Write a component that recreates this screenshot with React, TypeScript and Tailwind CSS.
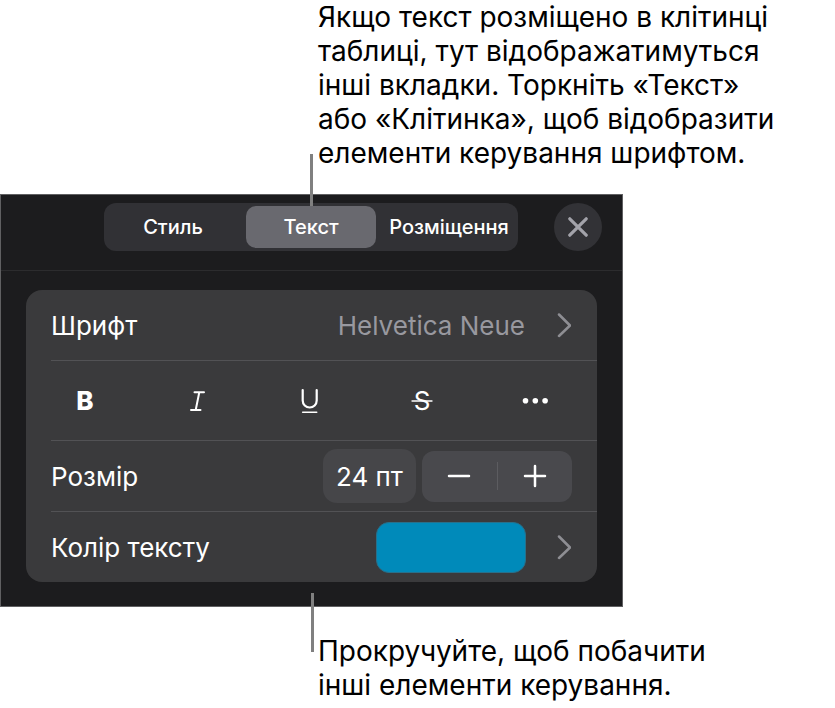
import { useState } from 'react'
import type { ReactNode } from 'react'

const TABS = ['Стиль', 'Текст', 'Розміщення']

function Chevron() {
  return (
    <svg
      viewBox="0 0 14 26"
      className="h-[26px] w-[14px] shrink-0 fill-none stroke-[#8e8e93]"
      strokeWidth="2.5"
      strokeLinecap="round"
      strokeLinejoin="round"
      aria-hidden
    >
      <path d="M2 2.5 13 13.500 2 24" />
    </svg>
  )
}

function Divider() {
  return <hr className="ml-[25px] border-t border-[#525255]" />
}

function FormatButton({ label, children }: { label: string; children: ReactNode }) {
  return (
    <button type="button" aria-label={label} className="grid h-full place-items-center text-white">
      <svg
        viewBox="0 0 32 32"
        className="h-8 w-8 fill-none stroke-current"
        strokeWidth="2"
        strokeLinecap="round"
        aria-hidden
      >
        {children}
      </svg>
    </button>
  )
}

function Header() {
  const [active, setActive] = useState('Текст')

  return (
    <header className="flex items-center gap-9 border-b border-[#2c2c2e] pt-2 pr-5 pb-[19px] pl-[103px]">
      <div role="tablist" className="grid h-12 min-w-0 flex-1 grid-cols-3 rounded-xl bg-[#313135]">
        {TABS.map((tab) => (
          <button
            key={tab}
            type="button"
            role="tab"
            aria-selected={tab === active}
            onClick={() => setActive(tab)}
            className={
              tab === active
                ? 'mx-1 my-[3px] rounded-[10px] bg-[#69696f] text-xl font-medium text-white'
                : 'mx-1 my-[3px] rounded-[10px] text-xl font-medium text-white'
            }
          >
            {tab}
          </button>
        ))}
      </div>
      <button
        type="button"
        aria-label="Закрити"
        className="grid h-12 w-12 shrink-0 place-items-center rounded-full bg-[#323236]"
      >
        <svg
          viewBox="0 0 20 20"
          className="h-5 w-5 fill-none stroke-[#a3a3aa]"
          strokeWidth="3.2"
          strokeLinecap="round"
          aria-hidden
        >
          <path d="M1.8 1.8 18.2 18.2M18.2 1.8 1.8 18.2" />
        </svg>
      </button>
    </header>
  )
}

function FontCard() {
  const [size, setSize] = useState(24)

  return (
    <div className="rounded-2xl bg-[#3a3a3c] text-[26px] text-white">
      <button type="button" className="flex h-[70px] w-full items-center pr-[26px] pl-[25px] text-left">
        <span className="flex-1">Шрифт</span>
        <span className="mr-8 text-[#98989f]">Helvetica Neue</span>
        <Chevron />
      </button>
      <Divider />

      <div className="grid h-[79px] grid-cols-5 pr-1.5 pl-[3px]">
        <FormatButton label="Жирний">
          <text x="16" y="25" textAnchor="middle" fontSize="26" fontWeight="800" className="fill-current stroke-none">
            B
          </text>
        </FormatButton>
        <FormatButton label="Курсив">
          <path d="M12.500 7.200H22M9 25h9.500M17.300 7.200 13.700 25" />
        </FormatButton>
        <FormatButton label="Підкреслений">
          <path d="M8.700 5v10.500a7 7 0 0 0 14 0V5" strokeWidth="2.200" />
          <path d="M8.700 27.200h14" strokeWidth="1.600" />
        </FormatButton>
        <FormatButton label="Закреслений">
          <text x="16" y="25" textAnchor="middle" fontSize="26" className="fill-current stroke-none">
            S
          </text>
          <path d="M6 16h20" strokeWidth="1.300" />
        </FormatButton>
        <FormatButton label="Більше">
          <g className="fill-current stroke-none">
            <circle cx="6.500" cy="15.700" r="2.800" />
            <circle cx="16.300" cy="15.700" r="2.800" />
            <circle cx="26.100" cy="15.700" r="2.800" />
          </g>
        </FormatButton>
      </div>
      <Divider />

      <div className="flex h-[70px] items-center pr-[25px] pl-[25px]">
        <label htmlFor="size" className="flex-1">
          Розмір
        </label>
        <input
          id="size"
          value={`${size} пт`}
          readOnly
          className="mr-1.5 h-[54px] w-[93px] rounded-[14px] bg-[#464649] text-center"
        />
        <div className="flex h-[51px] w-[150px] items-center rounded-xl bg-[#49494d]">
          <button
            type="button"
            aria-label="Зменшити"
            onClick={() => setSize(size - 1)}
            className="grid h-full flex-1 place-items-center"
          >
            <svg viewBox="0 0 24 24" className="h-6 w-6 stroke-white" strokeWidth="2.500" strokeLinecap="round">
              <path d="M2 12h20" />
            </svg>
          </button>
          <span className="h-7 w-px bg-[#5c5c60]" />
          <button
            type="button"
            aria-label="Збільшити"
            onClick={() => setSize(size + 1)}
            className="grid h-full flex-1 place-items-center"
          >
            <svg viewBox="0 0 24 24" className="h-6 w-6 stroke-white" strokeWidth="2.500" strokeLinecap="round">
              <path d="M2 12h20M12 2v20" />
            </svg>
          </button>
        </div>
      </div>
      <Divider />

      <button type="button" className="flex h-[70px] w-full items-center pr-[26px] pl-[25px] text-left">
        <span className="flex-1">Колір тексту</span>
        <span className="mr-[31px] h-[51px] w-[150px] rounded-[13px] border border-[#28708b] bg-[#008aba]" />
        <Chevron />
      </button>
    </div>
  )
}

export default function App() {
  return (
    <main className="bg-white font-['Inter','Noto_Sans',sans-serif] text-black">
      <div className="relative pb-6 pl-[318px] text-[28px] leading-[34px]">
        <p>
          Якщо текст розміщено в клітинці
          <br />
          таблиці, тут відображатимуться
          <br />
          інші вкладки. Торкніть «Текст»
          <br />
          або «Клітинка», щоб відобразити
          <br />
          елементи керування шрифтом.
        </p>
        {/* leader down to the active tab */}
        <span className="absolute -bottom-3 left-[310px] z-10 h-[52px] w-[3px] bg-[#808080]" />
      </div>

      <section className="max-w-[623px] border border-[#606062] bg-[#1c1c1e]">
        <Header />
        <div className="px-[25px] pt-[19px] pb-6">
          <FontCard />
        </div>
      </section>

      <div className="relative pt-[27px] pl-[318px] text-[28px] leading-[34px]">
        <p>
          Прокручуйте, щоб побачити
          <br />
          інші елементи керування.
        </p>
        <span className="absolute -top-3.5 left-[311px] h-[59px] w-[3px] bg-[#808080]" />
      </div>
    </main>
  )
}
